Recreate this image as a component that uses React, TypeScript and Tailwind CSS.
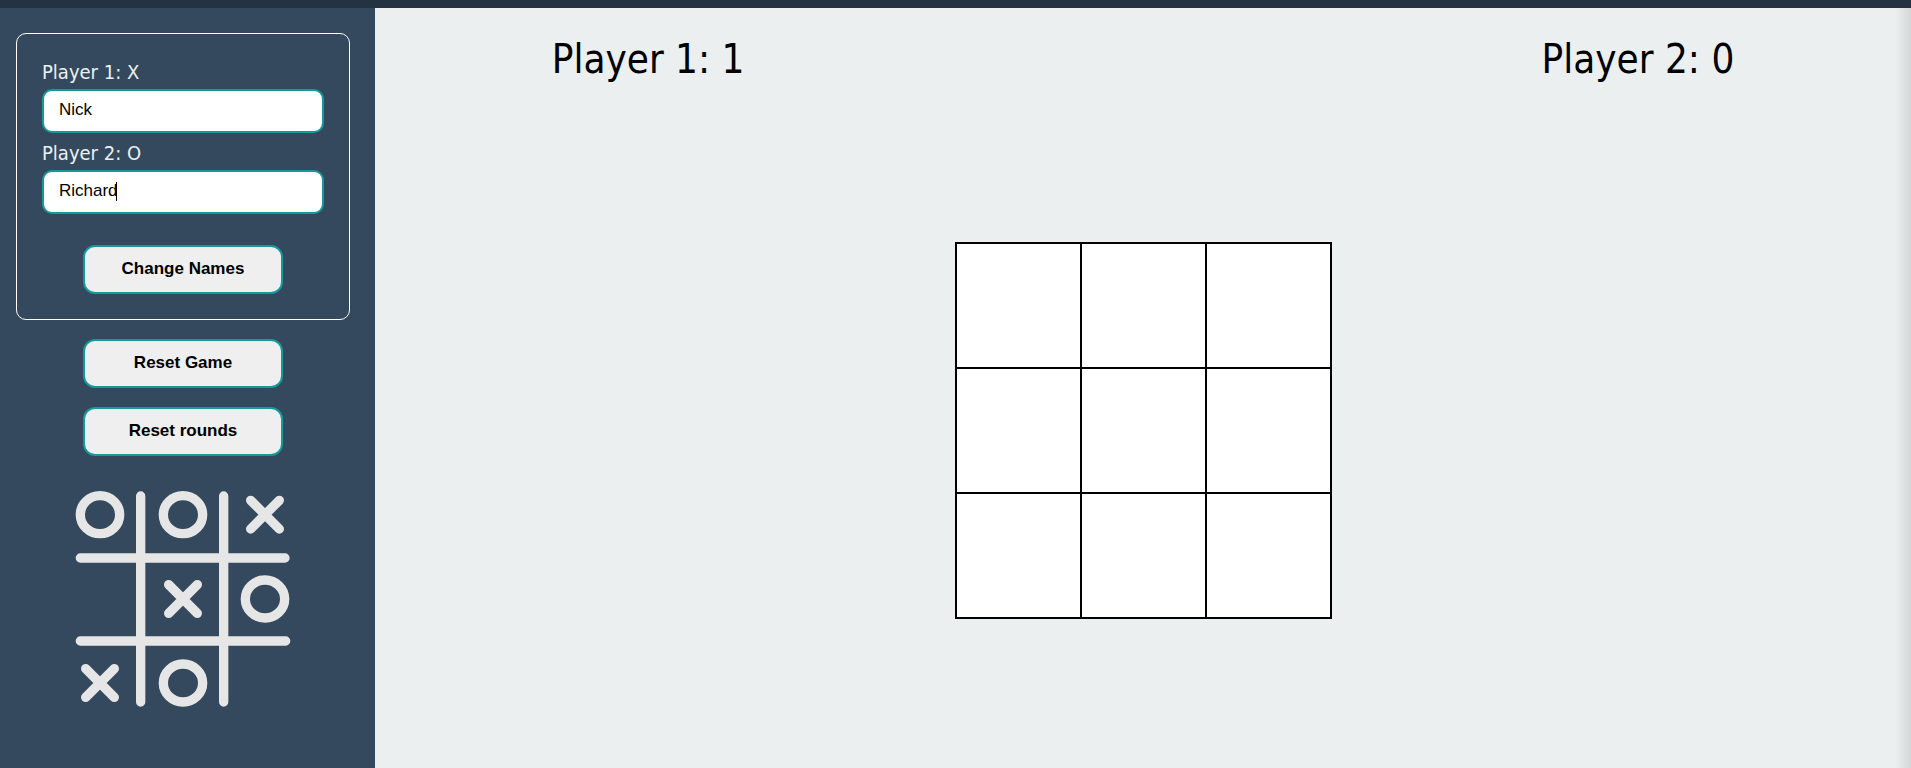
import { useState } from "react";
import type { ReactNode } from "react";

type Mark = "X" | "O" | null;

const LINES = [
  [0, 1, 2], [3, 4, 5], [6, 7, 8],
  [0, 3, 6], [1, 4, 7], [2, 5, 8],
  [0, 4, 8], [2, 4, 6],
];

const EMPTY: Mark[] = Array(9).fill(null);

function winnerOf(cells: Mark[]): Mark {
  for (const [a, b, c] of LINES) {
    if (cells[a] && cells[a] === cells[b] && cells[a] === cells[c]) return cells[a];
  }
  return null;
}

function NameField(props: {
  id: string;
  label: string;
  value: string;
  onChange: (value: string) => void;
  children?: ReactNode;
}) {
  return (
    <div>
      <label htmlFor={props.id} className="block h-[37px] pt-1.5 text-xl leading-7 text-[#ecf0f1]">
        {props.label}
      </label>
      <div className="relative">
        <input
          id={props.id}
          type="text"
          value={props.value}
          onChange={(e) => props.onChange(e.target.value)}
          className="block h-11 w-full rounded-[10px] border-2 border-[#159a9c] bg-white px-[15px] pb-0.5 font-['Liberation_Sans',Arial,sans-serif] text-[17px] text-black caret-transparent outline-none"
        />
        {props.children}
      </div>
    </div>
  );
}

function PanelButton(props: { children: ReactNode; onClick: () => void }) {
  return (
    <button
      type="button"
      onClick={props.onClick}
      className="h-[49px] w-[200px] rounded-xl border-2 border-[#159a9c] bg-[#efefef] pb-px font-['Liberation_Sans',Arial,sans-serif] text-[17px] font-bold text-black"
    >
      {props.children}
    </button>
  );
}

function Cross({ x, y }: { x: number; y: number }) {
  return <path d={`M${x - 43} ${y - 43}L${x + 43} ${y + 43}M${x + 43} ${y - 43}L${x - 43} ${y + 43}`} />;
}

function Ring({ x, y }: { x: number; y: number }) {
  return <ellipse cx={x} cy={y} rx={59} ry={57} />;
}

function Logo() {
  return (
    <svg
      viewBox="45 63 648 648"
      className="size-[216px]"
      fill="none"
      stroke="#e6e6e6"
      strokeWidth="28"
      strokeLinecap="round"
      aria-hidden="true"
    >
      <path d="M242 78V696M491 78V696M61 264H675M61 513H677" />
      <Ring x={120} y={134} />
      <Ring x={369} y={134} />
      <Ring x={615} y={387} />
      <Ring x={369} y={639} />
      <Cross x={615} y={134} />
      <Cross x={369} y={387} />
      <Cross x={120} y={639} />
    </svg>
  );
}

export default function App() {
  const [first, setFirst] = useState("Nick");
  const [second, setSecond] = useState("Richard");
  const [names, setNames] = useState(["Player 1", "Player 2"]);
  const [score, setScore] = useState([1, 0]);
  const [cells, setCells] = useState<Mark[]>(EMPTY);

  const play = (index: number) => {
    if (cells[index] || winnerOf(cells)) return;
    const mark: Mark = cells.filter(Boolean).length % 2 === 0 ? "X" : "O";
    const next = cells.map((c, i) => (i === index ? mark : c));
    setCells(next);
    if (winnerOf(next)) setScore(mark === "X" ? [score[0] + 1, score[1]] : [score[0], score[1] + 1]);
  };

  return (
    <div className="flex min-h-screen flex-col bg-[#ebeff0] font-['DejaVu_Sans_Condensed',Tahoma,'DejaVu_Sans',sans-serif] text-black">
      <header className="h-2 bg-[#243342]" />
      <div className="flex flex-1">
        <aside className="flex w-[375px] shrink-0 flex-col items-center gap-[19px] bg-[#34495e] pt-[25px] pr-[25px] pl-4">
          <section className="flex w-full flex-col rounded-[10px] border border-white px-[25px] pt-[18px] pb-[25px]">
            <NameField id="player-one" label="Player 1: X" value={first} onChange={setFirst} />
            <NameField id="player-two" label="Player 2: O" value={second} onChange={setSecond}>
              {second === "Richard" && <span className="absolute top-3 left-[74px] h-[19px] w-px bg-black" />}
            </NameField>
            <div className="mt-[31px] flex justify-center">
              <PanelButton onClick={() => setNames([first, second])}>Change Names</PanelButton>
            </div>
          </section>
          <PanelButton onClick={() => setCells(EMPTY)}>Reset Game</PanelButton>
          <PanelButton
            onClick={() => {
              setCells(EMPTY);
              setScore([0, 0]);
            }}
          >
            Reset rounds
          </PanelButton>
          <div className="pt-4">
            <Logo />
          </div>
        </aside>
        <main className="relative flex flex-1 flex-col">
          <div className="grid grid-cols-[16fr_13fr_16fr] pt-[27px] text-center text-[40px] leading-12">
            <p>{names[0]}: {score[0]}</p>
            <p className="col-start-3">{names[1]}: {score[1]}</p>
          </div>
          <div className="flex justify-center pt-[159px]">
            <div className="grid grid-cols-3 gap-0.5 border-2 border-black bg-black">
              {cells.map((mark, i) => (
                <button
                  key={i}
                  type="button"
                  aria-label={`Cell ${i + 1}`}
                  onClick={() => play(i)}
                  className="size-[123px] bg-white text-7xl"
                >
                  {mark}
                </button>
              ))}
            </div>
          </div>
          <div className="pointer-events-none absolute inset-y-0 right-0 w-4 bg-linear-to-r from-transparent to-black/10" />
        </main>
      </div>
    </div>
  );
}
